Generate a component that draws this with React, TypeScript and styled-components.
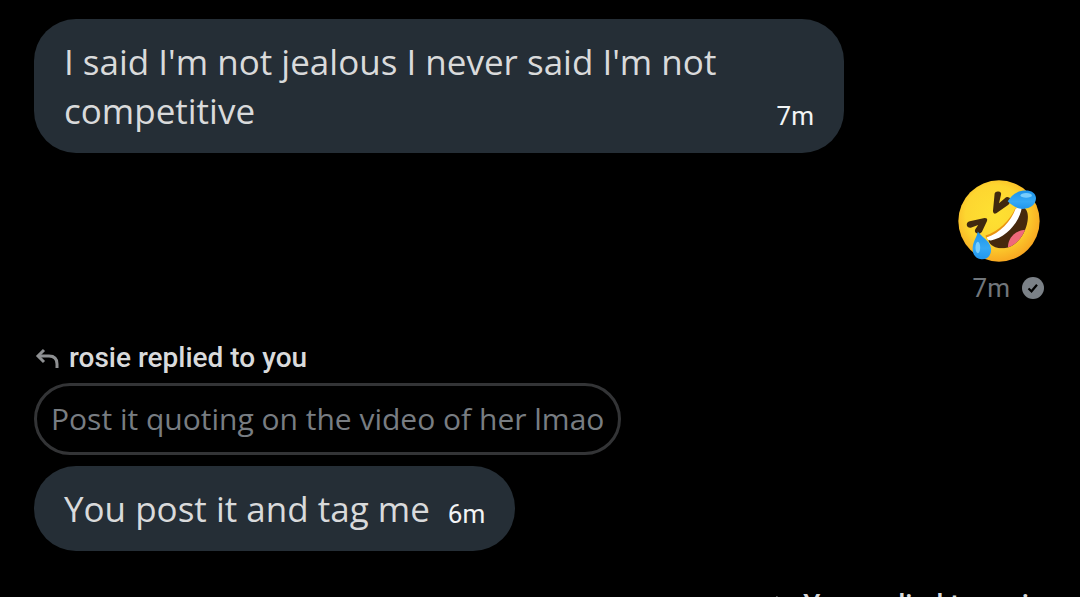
import styled, { createGlobalStyle } from "styled-components";

const Global = createGlobalStyle`
  * { box-sizing: border-box; }
  body {
    margin: 0;
    background: #000;
    color: #d9dadb;
    font-family: "Open Sans", "Noto Sans", sans-serif;
    overflow: hidden;
  }
`;

const Thread = styled.main`
  display: flex;
  flex-direction: column;
  align-items: flex-start;
  padding: 19px 36px 0 34px;
`;

const Bubble = styled.article<{ $wide?: boolean }>`
  display: flex;
  align-items: flex-end;
  justify-content: space-between;
  gap: 18px;
  width: ${(p) => (p.$wide ? "75vw" : "auto")};
  padding: 18px 30px;
  border-radius: 42px;
  background: #252e36;
`;

const Message = styled.p`
  margin: 0;
  font-size: 35px;
  line-height: 49px;
`;

const Time = styled.time<{ $muted?: boolean }>`
  color: ${(p) => (p.$muted ? "#71767b" : "#f2f4f5")};
  font-family: Roboto, sans-serif;
  font-size: 26px;
  line-height: 38px;
`;

const Sent = styled.article`
  display: flex;
  flex-direction: column;
  align-items: flex-end;
  align-self: flex-end;
  margin-top: 27px;
`;

const Emoji = styled.svg`
  display: block;
  margin-right: 4px;
`;

const Status = styled.div`
  display: flex;
  align-items: center;
  gap: 12px;
  margin-top: 7px;
`;

const ReplyLabel = styled.div<{ $own?: boolean }>`
  display: flex;
  align-items: center;
  align-self: ${(p) => (p.$own ? "flex-end" : "flex-start")};
  gap: 10px;
  margin-top: ${(p) => (p.$own ? "36px" : "33px")};
  font-family: Roboto, sans-serif;
  font-size: 28px;
  font-weight: 500;
  line-height: 36px;
`;

const Quote = styled.blockquote`
  margin: 7px 0 11px;
  padding: 12px 14px;
  border: 3px solid #333436;
  border-radius: 36px;
  color: #787d82;
  font-size: 30px;
  line-height: 42px;
`;

const ReplyIcon = () => (
  <svg width="25" height="22" viewBox="0 0 25 22" fill="none" stroke="#8e9092" strokeWidth="3" aria-hidden="true">
    <path d="M10 3 L4 9 L10 15" />
    <path d="M4 9 H15 Q23 9 23 17 V21" />
  </svg>
);

const SentIcon = () => (
  <svg width="22" height="22" viewBox="0 0 22 22" role="img" aria-label="Sent">
    <circle cx="11" cy="11" r="11" fill="#7b8187" />
    <path d="M6.5 11.5 L9.5 14.3 L15 7.7" fill="none" stroke="#000" strokeWidth="2.2" />
  </svg>
);

const LaughingEmoji = () => (
  <Emoji width="82" height="82" viewBox="53 32 244 244" role="img" aria-label="Rolling on the floor laughing">
    <defs>
      <radialGradient id="face" cx="0.45" cy="0.42" r="0.6">
        <stop offset="0" stopColor="#fee132" />
        <stop offset="0.6" stopColor="#fdd630" />
        <stop offset="1" stopColor="#f8a520" />
      </radialGradient>
      <linearGradient id="tear" x1="0" y1="0" x2="0" y2="1">
        <stop offset="0" stopColor="#1c93ea" />
        <stop offset="0.6" stopColor="#35a9f5" />
        <stop offset="1" stopColor="#2196ee" />
      </linearGradient>
      <clipPath id="mouth">
        <path d="M238 112 C256 112 264 128 260 154 C254 194 226 231 190 235 C168 237 150 229 143 212 C184 198 220 164 238 112 Z" />
      </clipPath>
    </defs>
    <circle cx="175" cy="154" r="121" fill="url(#face)" />
    <path d="M136 201 C176 188 210 156 228 116" fill="none" stroke="#e9930f" strokeWidth="8" />
    <g clipPath="url(#mouth)">
      <path d="M130 100 H270 V245 H130 Z" fill="#46290d" />
      <path d="M202 240 C198 206 224 180 256 180 L275 200 L225 250 Z" fill="#f0697a" />
    </g>
    <path d="M225 116 L243 114 C236 158 196 204 151 212 Q143 213 138 203 C178 190 210 156 225 116 Z" fill="#fff" />
    <path d="M162 72 Q164 65 173 66 Q183 67 181 76 L175 101 L196 83 Q207 80 210 90 Q211 99 203 106 L167 131 Q158 135 157 125 Z" fill="#40290f" />
    <path d="M88 155 L132 145 Q143 145 139 155 L124 187 Q117 196 107 190 Q100 184 106 176 L113 166 L91 174 Q81 175 79 166 Q79 157 88 155 Z" fill="#40290f" />
    <path d="M201 95 C209 82 223 67 244 64 C266 60 284 68 285 85 C286 103 270 118 246 118 C227 118 211 105 201 95 Z" fill="url(#tear)" />
    <path d="M112 185 C121 200 147 211 151 234 C154 255 141 269 123 268 C104 267 94 250 97 230 C99 213 109 202 112 185 Z" fill="url(#tear)" />
    <ellipse cx="256" cy="78" rx="17" ry="7" fill="#78cdfc" />
    <ellipse cx="112" cy="233" rx="7" ry="17" fill="#78cdfc" />
  </Emoji>
);

export default function App() {
  return (
    <>
      <Global />
      <Thread>
        <Bubble $wide>
          <Message>I said I'm not jealous I never said I'm not competitive</Message>
          <Time>7m</Time>
        </Bubble>
        <Sent>
          <LaughingEmoji />
          <Status>
            <Time $muted>7m</Time>
            <SentIcon />
          </Status>
        </Sent>
        <ReplyLabel>
          <ReplyIcon />
          <span>rosie replied to you</span>
        </ReplyLabel>
        <Quote>Post it quoting on the video of her lmao</Quote>
        <Bubble>
          <Message>You post it and tag me</Message>
          <Time>6m</Time>
        </Bubble>
        <ReplyLabel $own>
          <ReplyIcon />
          <span>You replied to rosie</span>
        </ReplyLabel>
      </Thread>
    </>
  );
}
